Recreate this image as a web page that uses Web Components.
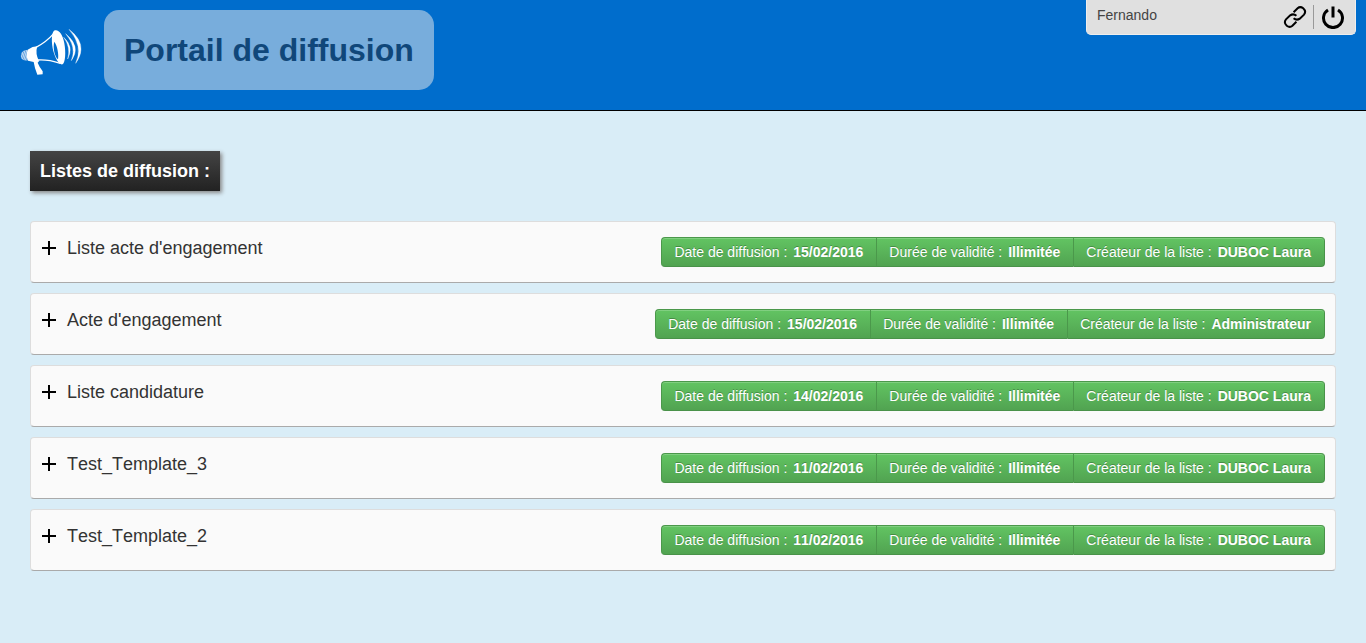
<!DOCTYPE html>
<html lang="fr">
<head>
<meta charset="utf-8">
<title>Portail de diffusion</title>
<style>
body { margin: 0; min-height: 100vh; background: #d9edf7; color: #333; font: 14px/20px "Liberation Sans", Arial, sans-serif; font-kerning: none; }
</style>
</head>
<body>
<portal-header heading="Portail de diffusion"><user-panel slot="user">Fernando</user-panel></portal-header>
<list-section heading="Listes de diffusion :">
  <list-row date="15/02/2016" validity="Illimitée" creator="DUBOC Laura">Liste acte d'engagement</list-row>
  <list-row date="15/02/2016" validity="Illimitée" creator="Administrateur">Acte d'engagement</list-row>
  <list-row date="14/02/2016" validity="Illimitée" creator="DUBOC Laura">Liste candidature</list-row>
  <list-row date="11/02/2016" validity="Illimitée" creator="DUBOC Laura">Test_Template_3</list-row>
  <list-row date="11/02/2016" validity="Illimitée" creator="DUBOC Laura">Test_Template_2</list-row>
</list-section>
<script>
class BaseElement extends HTMLElement {
  render(html) {
    this.attachShadow({ mode: 'open' }).innerHTML = html;
  }
}

customElements.define('megaphone-logo', class extends BaseElement {
  connectedCallback() {
    this.render(`
<style>:host { display: block; } svg { display: block; width: 62px; height: 48px; }</style>
<svg viewBox="60 84 186 144" fill="#fff" aria-hidden="true">
  <path d="M82 150 Q70 149 65 158 Q60 168 65 176 Q70 183 83 181 Z" fill="#b9d6f1"/>
  <path d="M69 154 L80 180 M65 163 L73 180 M75 151 L82 168" stroke="#3b8ad8" stroke-width="2"/>
  <path d="M83 149 Q98 139 112 139 Q105 160 117 184 L113 188 Q119 203 128 214 L128 223 L112 224 Q104 205 101 186 L84 182 Q77 166 83 149 Z"/>
  <path d="M108 142 Q138 127 161 101 M114 180 Q144 178 181 190" fill="none" stroke="#fff" stroke-width="4"/>
  <path fill-rule="evenodd" d="M165 91 C176 88 189 104 193 130 C198 158 196 188 188 193 C178 197 164 174 158 145 C153 116 156 93 165 91 Z M163 125 C158 142 164 170 174 178 C177 164 172 137 163 125 Z"/>
  <path d="M191 112 Q223 141 203 177 Q213 142 191 112 Z M197 101 Q245 140 214 182 Q231 141 197 101 Z M207 88 Q267 134 227 190 Q251 139 207 88 Z" stroke="#fff" stroke-width="1"/>
</svg>`);
  }
});

customElements.define('portal-header', class extends BaseElement {
  connectedCallback() {
    this.render(`
<style>
:host { display: block; background: #006dcc; border-bottom: 1px solid #000; }
header { display: flex; align-items: flex-start; min-height: 110px; padding: 0 10px 0 20px; box-sizing: border-box; }
megaphone-logo { margin: 28px 22px 0 0; }
h1 { margin: 10px 0; padding: 20px; border-radius: 15px; background: #78addc; color: #10477a; font-size: 32px; line-height: 40px; }
slot { display: block; margin-left: auto; }
</style>
<header><megaphone-logo></megaphone-logo><h1>${this.getAttribute('heading')}</h1><slot name="user"></slot></header>`);
  }
});

customElements.define('user-panel', class extends BaseElement {
  connectedCallback() {
    this.render(`
<style>
:host { display: flex; box-sizing: border-box; width: 270px; height: 35px; padding: 5px 10px; border: 1px solid #eee; border-top: 0; border-radius: 0 0 5px 5px; background: #e0e0e0; color: #444; }
.name { flex: 1; }
a { display: block; height: 24px; color: #000; }
.out { margin-left: 6px; padding-left: 7px; border-left: 1px solid #999; }
svg { display: block; width: 24px; height: 24px; fill: none; stroke: currentColor; }
</style>
<span class="name"><slot></slot></span>
<a href="#lien" aria-label="Lien"><svg viewBox="0 0 24 24" stroke-width="2"><path d="M10.6 7.2 L14.6 3.2 Q17.2 1 20.2 3.2 Q23.6 6.4 21 9.6 L16.8 13.6 Q13.6 15.8 10.6 13.2"/><path d="M13.4 16.8 L9.4 20.8 Q6.8 23 3.8 20.8 Q.4 17.6 3 14.4 L7.2 10.4 Q10.4 8.2 13.4 10.8"/></svg></a>
<a class="out" href="#deconnexion" aria-label="Déconnexion"><svg viewBox="0 0 24 24" stroke-width="3"><path d="M7 5 A9.5 9.5 0 1 0 17 5"/><path d="M12 1.5 V12.5"/></svg></a>`);
  }
});

customElements.define('list-section', class extends BaseElement {
  connectedCallback() {
    this.render(`
<style>
:host { display: block; padding: 40px 30px; }
h2 { width: fit-content; margin: 0 0 30px; padding: 10px; background: linear-gradient(#444, #222); color: #fff; font-size: 18px; line-height: 20px; box-shadow: 2px 2px 4px #888; }
.rows { display: grid; gap: 10px; }
</style>
<h2>${this.getAttribute('heading')}</h2><div class="rows"><slot></slot></div>`);
  }
});

customElements.define('list-row', class extends BaseElement {
  connectedCallback() {
    const facts = [['Date de diffusion', 'date'], ['Durée de validité', 'validity'], ['Créateur de la liste', 'creator']];
    this.render(`
<style>
:host { display: flex; justify-content: space-between; align-items: flex-start; padding: 15px 10px; border: 1px solid #ddd; border-bottom-color: #aaa; border-radius: 4px; background: #fafafa; }
button { margin: 0; font: inherit; cursor: pointer; }
.toggle { display: flex; align-items: center; gap: 10px; padding: 0; border: 0; background: none; color: #333; font-size: 18px; line-height: 22px; }
svg { width: 16px; height: 16px; stroke: #000; stroke-width: 2; }
.facts { display: flex; }
.facts button { display: flex; gap: 6px; padding: 4px 13px 4px 12px; border: 1px solid #4b984b; border-right: 0; border-bottom-color: #499249; background: linear-gradient(#62c462, #51a351); color: #fff; line-height: 20px; text-shadow: 0 -1px 0 rgba(0,0,0,.25); box-shadow: inset 0 1px 0 rgba(255,255,255,.2); }
.facts button:first-child { border-radius: 4px 0 0 4px; }
.facts button:last-child { border-right: 1px solid #499249; border-radius: 0 4px 4px 0; }
</style>
<button class="toggle" aria-expanded="false"><svg viewBox="0 0 16 16" aria-hidden="true"><path d="M1 8 H15 M8 1 V15"/></svg><span><slot></slot></span></button>
<div class="facts">${facts.map(([label, key]) => `<button><span>${label} :</span> <b>${this.getAttribute(key)}</b></button>`).join('')}</div>`);
  }
});
</script>
</body>
</html>
